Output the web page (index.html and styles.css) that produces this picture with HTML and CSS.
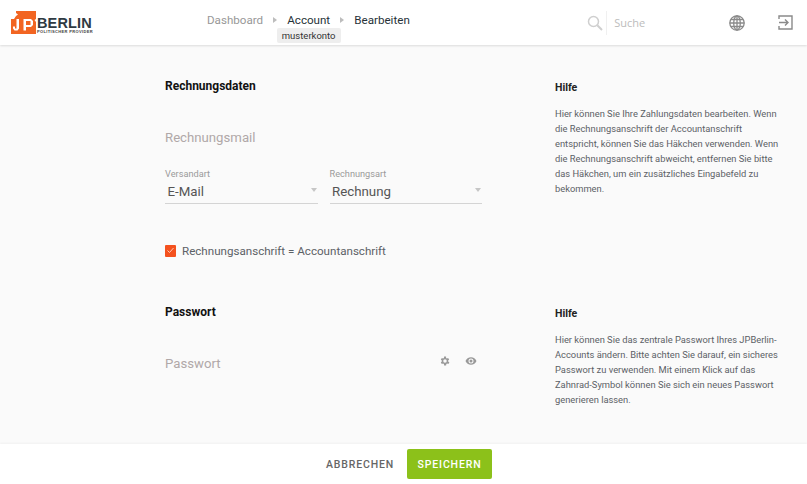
FILE: index.html
```html
<!DOCTYPE html>
<html lang="de">
<head>
<meta charset="utf-8">
<title>Account bearbeiten</title>
<link rel="stylesheet" href="styles.css">
</head>
<body>
<header class="topbar">
  <a class="logo">
    <svg class="logo-mark" width="26" height="23" viewBox="0 0 26 23"><path d="M5 0H25V8L23.500 9 25 11V23H0V8H3L5 5 7 3.500 5 2z" fill="#f26522"/><path d="M5.500 8H8V17.500L6.500 19.500H3.500L2 17.500V15.500H4V17.500H5.500z M12.500 8H20L22 10V14L20 16H15V19.500H12.500z M15 10V14H19.500V10z" fill="#fff"/></svg>
    <span class="logo-text">
      <span class="logo-name">BERLIN</span>
      <span class="logo-sub">POLITISCHER PROVIDER</span>
    </span>
  </a>
  <nav class="crumbs">
    <span class="crumb crumb-muted">Dashboard</span>
    <span class="crumb-arrow"></span>
    <span class="crumb crumb-account">Account<span class="badge">musterkonto</span></span>
    <span class="crumb-arrow"></span>
    <span class="crumb">Bearbeiten</span>
  </nav>
  <div class="search">
    <svg width="16" height="16" viewBox="0 0 16 16" fill="none" stroke="#cfcfcf" stroke-width="1.500"><circle cx="6.500" cy="6.500" r="5"/><path d="M10.300 10.300L15 15" stroke-width="2"/></svg>
    <span class="search-sep"></span>
    <span class="search-text">Suche</span>
  </div>
  <svg class="globe" width="16" height="16" viewBox="0 0 16 16" fill="none" stroke="#8a8a8a" stroke-width="1.300"><circle cx="8" cy="8" r="7.200"/><ellipse cx="8" cy="8" rx="3.300" ry="7.200"/><path d="M8 .8v14.400M.8 8h14.400M1.800 4.500h12.400M1.800 11.500h12.400"/></svg>
  <svg class="exit" width="15" height="15" viewBox="0 0 15 15" fill="none" stroke="#8a8a8a" stroke-width="1.400"><path d="M1 4V1h13v13H1v-3"/><path d="M1 7.500h8.500M7 4.500l3 3-3 3"/></svg>
</header>

<main class="content">
  <section class="row row-billing">
    <div class="form-col">
      <h2 class="section-title">Rechnungsdaten</h2>
      <div class="placeholder placeholder-mail">Rechnungsmail</div>
      <div class="selects">
        <div class="select">
          <label class="select-label">Versandart</label>
          <div class="select-value">E-Mail<span class="select-caret"></span></div>
        </div>
        <div class="select">
          <label class="select-label">Rechnungsart</label>
          <div class="select-value">Rechnung<span class="select-caret"></span></div>
        </div>
      </div>
      <div class="check-row">
        <span class="checkbox"><svg width="11" height="11" viewBox="0 0 11 11" fill="none" stroke="#ffc9b5" stroke-width="1"><path d="M2.500 5.500l2 2L8.500 3"/></svg></span>
        <span class="check-label">Rechnungsanschrift = Accountanschrift</span>
      </div>
    </div>
    <aside class="help">
      <h3 class="help-title">Hilfe</h3>
      <p class="help-text">Hier können Sie Ihre Zahlungsdaten bearbeiten. Wenn<br>die Rechnungsanschrift der Accountanschrift<br>entspricht, können Sie das Häkchen verwenden. Wenn<br>die Rechnungsanschrift abweicht, entfernen Sie bitte<br>das Häkchen, um ein zusätzliches Eingabefeld zu<br>bekommen.</p>
    </aside>
  </section>
  <section class="row row-password">
    <div class="form-col">
      <h2 class="section-title">Passwort</h2>
      <div class="password-field">
        <span class="placeholder">Passwort</span>
        <span class="pw-icons">
          <svg width="12" height="12" viewBox="0 0 24 24" fill="#999"><path d="M19.400 13a7.500 7.500 0 0 0 0-2l2.100-1.600-2-3.500-2.500 1a7.500 7.500 0 0 0-1.700-1L15.400 3.200h-4l-.4 2.700a7.500 7.500 0 0 0-1.700 1l-2.500-1-2 3.500L6.900 11a7.500 7.500 0 0 0 0 2l-2.100 1.600 2 3.500 2.500-1a7.500 7.500 0 0 0 1.700 1l.4 2.700h4l.4-2.700a7.500 7.500 0 0 0 1.700-1l2.500 1 2-3.500zM13.200 15.500a3.500 3.500 0 1 1 0-7 3.500 3.500 0 0 1 0 7z" transform="translate(-1.200 0)"/></svg>
          <svg width="12" height="12" viewBox="0 0 24 24" fill="#999"><path d="M12 4.500C7 4.500 2.700 7.600 1 12c1.700 4.400 6 7.500 11 7.500s9.300-3.100 11-7.500c-1.700-4.400-6-7.500-11-7.500zM12 17a5 5 0 1 1 0-10 5 5 0 0 1 0 10zm0-8a3 3 0 1 0 0 6 3 3 0 0 0 0-6z"/></svg>
        </span>
      </div>
    </div>
    <aside class="help">
      <h3 class="help-title">Hilfe</h3>
      <p class="help-text">Hier können Sie das zentrale Passwort Ihres JPBerlin-<br>Accounts ändern. Bitte achten Sie darauf, ein sicheres<br>Passwort zu verwenden. Mit einem Klick auf das<br>Zahnrad-Symbol können Sie sich ein neues Passwort<br>generieren lassen.</p>
    </aside>
  </section>
</main>

<footer class="actions">
  <button class="btn btn-cancel">ABBRECHEN</button>
  <button class="btn btn-save">SPEICHERN</button>
</footer>
</body>
</html>
```
FILE: styles.css
```css
* { box-sizing: border-box; }
html, body { margin: 0; height: 100%; }
body {
  width: 807px;
  height: 484px;
  overflow: hidden;
  display: flex;
  flex-direction: column;
  background: #fafafa;
  font-family: Roboto, "Liberation Sans", sans-serif;
  color: #222;
}
.topbar {
  height: 45px;
  flex: none;
  display: flex;
  align-items: center;
  background: #fff;
  box-shadow: 0 1px 2px rgba(0,0,0,.12);
  position: relative;
  z-index: 1;
}
.logo { display: flex; margin-left: 11px; width: 82px; height: 23px; align-items: flex-start; }
.logo-mark { display: block; flex: none; }
.logo-text { display: flex; flex-direction: column; margin-top: 7px; }
.logo-name { font: 700 14.500px/11px "Liberation Sans", sans-serif; letter-spacing: .15px; color: #2f3a42; }
.logo-sub { font: 700 4px/4px "Liberation Sans", sans-serif; letter-spacing: .35px; color: #444; white-space: nowrap; margin-top: 1px; }
.crumbs { display: flex; align-items: center; margin-left: 114px; font-size: 11.600px; position: relative; top: -3px; }
.crumb { color: #263238; white-space: nowrap; }
.crumb-muted { color: #989898; }
.crumb-account { position: relative; }
.crumb-arrow {
  width: 0; height: 0;
  margin: 0 10px 0 10.200px;
  border-left: 4px solid #bdbdbd;
  border-top: 3.500px solid transparent;
  border-bottom: 3.500px solid transparent;
}
.badge {
  position: absolute;
  left: -10.500px;
  top: 15px;
  height: 15px;
  padding: 0 5px;
  border-radius: 2px;
  background: #eee;
  font-size: 9.500px;
  line-height: 15px;
  color: #333;
}
.search { display: flex; align-items: center; margin-left: 177.500px; width: 140px; }
.search-sep { width: 1px; height: 24px; background: #f0f0f0; margin: 0 7px 0 3px; }
.search-text { font: 400 11px "Open Sans", sans-serif; color: #bcbcbc; }
.globe { margin-left: 2px; }
.exit { margin-left: 33px; }
.content { flex: 1; min-height: 0; padding-left: 165px; }
.row { display: flex; }
.row-billing { padding-top: 34px; height: 246px; }
.row-password { padding-top: 14px; }
.form-col { width: 317px; flex: none; }
.section-title { margin: 0; font-size: 12px; line-height: 14px; font-weight: 700; color: #111; }
.placeholder { font-size: 13.200px; line-height: 18px; color: #b0a8a8; }
.placeholder-mail { margin-top: 36px; }
.selects { display: flex; gap: 12px; margin-top: 21px; }
.select { width: 152.500px; }
.select-label { display: block; font-size: 9.200px; line-height: 11px; color: #9a9a9a; }
.select-value {
  height: 26px;
  padding: 5px 2.500px 0;
  font-size: 13.300px;
  line-height: 17px;
  color: #555;
  border-bottom: 1px solid #d4d4d4;
  position: relative;
  margin-top: -1px;
}
.select-caret {
  position: absolute;
  right: 1px;
  top: 10px;
  border-top: 4px solid #c6c6c6;
  border-left: 3.500px solid transparent;
  border-right: 3.500px solid transparent;
}
.check-row { display: flex; align-items: center; margin-top: 39px; }
.checkbox { width: 11px; height: 12px; background: #f4511e; border-radius: 1px; display: block; flex: none; }
.checkbox svg { display: block; }
.check-label { margin-left: 6px; font-size: 11.600px; line-height: 16px; color: #5c6166; }
.password-field { display: flex; justify-content: space-between; align-items: center; margin-top: 36px; padding-right: 5px; }
.pw-icons { display: flex; gap: 14px; align-items: center; position: relative; top: -3px; }
.pw-icons svg { display: block; }
.help { margin-left: 73px; width: 235px; flex: none; }
.help-title { margin: 3px 0 0; font-size: 10.500px; line-height: 12px; font-weight: 700; color: #222; }
.help-text { margin: 12px 0 0; font-size: 9.330px; line-height: 15px; color: #5c6166; white-space: nowrap; }
.actions {
  height: 40px;
  flex: none;
  display: flex;
  justify-content: center;
  align-items: center;
  gap: 14px;
  background: #fff;
  box-shadow: 0 -1px 2px rgba(0,0,0,.04);
  padding-left: 11px;
}
.btn { border: 0; background: none; font: 500 10.500px Roboto, sans-serif; letter-spacing: .85px; padding: 0; }
.btn-cancel { color: #666; width: 67px; white-space: nowrap; }
.btn-save { width: 85px; height: 30px; background: #8cc11a; color: #fff; border-radius: 2px; }
```
